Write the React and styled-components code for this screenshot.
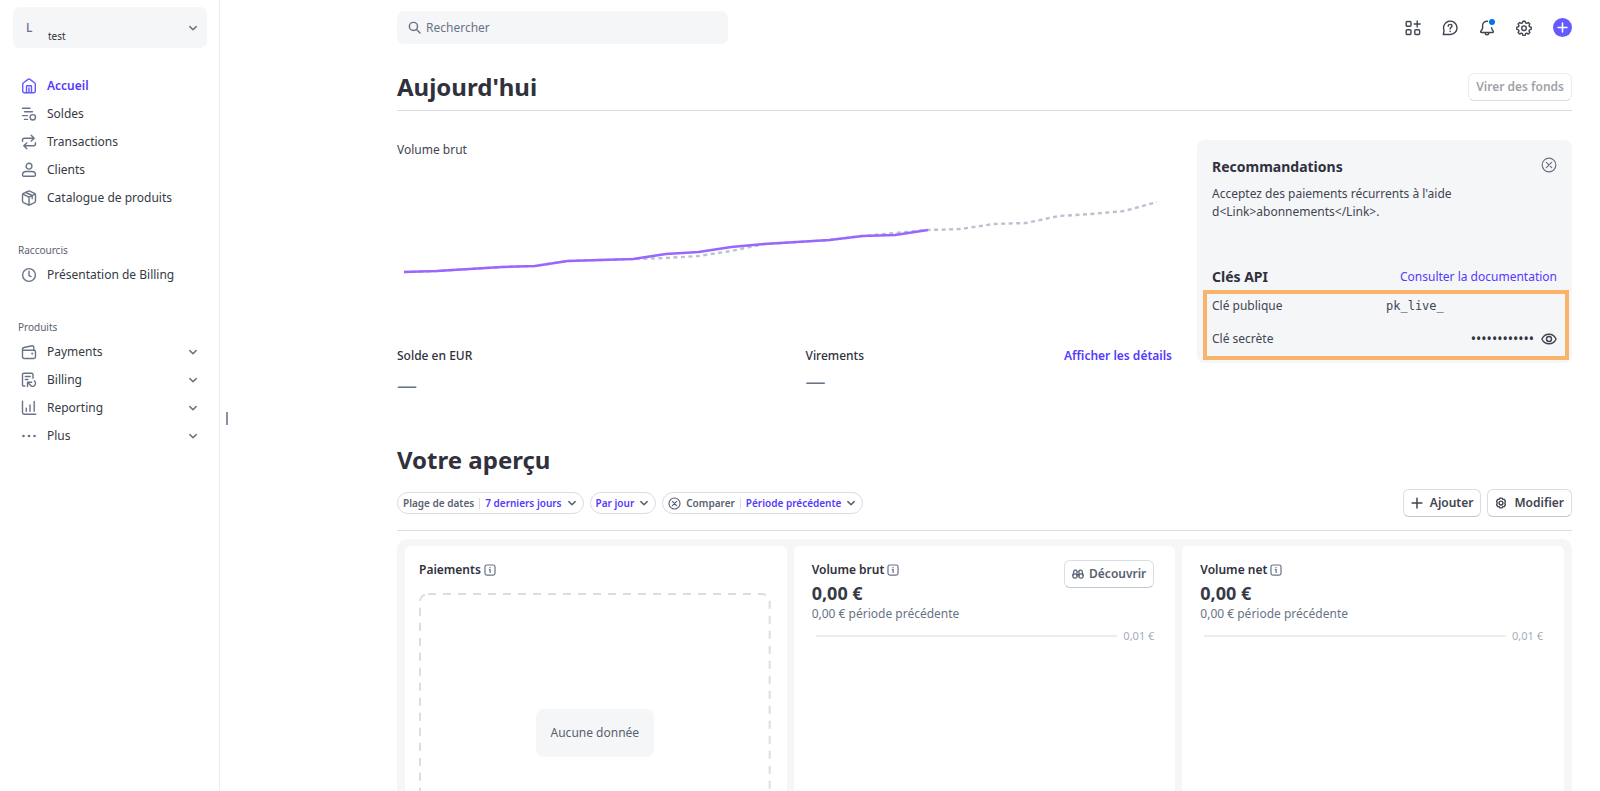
import React from "react";
import styled, { createGlobalStyle } from "styled-components";

const GlobalStyle = createGlobalStyle`
  * {
    box-sizing: border-box;
  }
  body {
    margin: 0;
    background: #fff;
    color: #414552;
    font-family: "Noto Sans", "Open Sans", sans-serif;
    font-size: 12px;
    line-height: 20px;
  }
  button, input {
    font-family: inherit;
    font-size: inherit;
    line-height: inherit;
    color: inherit;
  }
  a {
    color: inherit;
    text-decoration: none;
  }
  h1, h2, h3, p, ul, dl, dd {
    margin: 0;
    padding: 0;
  }
`;

// 16x16 stroke icons
const icons = {
  home: (
    <>
      <path d="M1.7 6.2v6.6c0 1.1.8 1.9 1.9 1.9h8.8c1.1 0 1.9-.8 1.9-1.9V6.2c0-.6-.3-1.1-.8-1.4L9 1.4c-.6-.4-1.4-.4-2 0L2.500 4.800c-.5.3-.8.8-.8 1.400z" />
      <path d="M5.500 14.500V8.400c0-.4.3-.7.7-.7h3.600c.4 0 .7.3.7.7v6.100M8 10v4.500" />
    </>
  ),
  balances: (
    <>
      <path d="M1.500 2.200h7.500M3.500 5.800h8M1.500 9.600h5M3.500 13.400h3" />
      <circle cx="11.800" cy="11.300" r="2.700" />
    </>
  ),
  transactions: (
    <>
      <path d="M1.500 7.300V6.200c0-1.100.9-2 2-2h9M10.200 1.300l3 2.900-3 2.900" />
      <path d="M14.500 8.700v1.100c0 1.100-.9 2-2 2h-9M5.800 8.900l-3 2.900 3 2.900" />
    </>
  ),
  person: (
    <>
      <circle cx="8" cy="4.200" r="2.900" />
      <path d="M1.500 12.700c0-2 1.700-3.200 3.700-3.200h5.600c2 0 3.700 1.200 3.700 3.200 0 1-.8 1.600-1.700 1.600H3.200c-.9 0-1.700-.6-1.700-1.600z" />
    </>
  ),
  box: (
    <>
      <path d="M7.300 1.200 2.500 3.400c-.6.300-1 .8-1 1.500v6.200c0 .7.400 1.200 1 1.500l4.800 2.200c.4.200 1 .200 1.400 0l4.800-2.200c.6-.3 1-.8 1-1.500V4.900c0-.7-.4-1.200-1-1.500L8.700 1.200c-.4-.2-1-.2-1.400 0z" />
      <path d="M1.800 4.200 8 7.100l6.200-2.900M8 7.100v7.700M4.800 2.500l6.400 3v3" />
    </>
  ),
  clock: (
    <>
      <circle cx="8" cy="8" r="6.400" />
      <path d="M8 4.200V8.600l2 1" />
    </>
  ),
  wallet: (
    <>
      <path d="M1.500 6.300h11.300c.9 0 1.700.7 1.700 1.700v4.800c0 1-.8 1.700-1.700 1.700H3.200c-1 0-1.700-.7-1.700-1.700V5.300c0-.9.600-1.600 1.500-1.800l8-1.700c.9-.2 1.800.5 1.800 1.400v2.700" />
      <circle cx="11.300" cy="9.600" r=".4" />
    </>
  ),
  billing: (
    <>
      <path d="M3.800 14H2.200c-.4 0-.7-.3-.7-.7V2.600c0-.8.600-1.400 1.400-1.400h7.700c.8 0 1.400.6 1.400 1.400v3.600M4.300 4.500h4.900M4.300 7.500h2.700" />
      <path d="M6.500 14.500V10.300h4.200M6.800 10.600l3 3c2 1.700 4.700.4 4.700-2.300 0-1-.4-1.900-1.200-2.500" />
    </>
  ),
  reporting: (
    <path d="M1.500 1.300v11.200c0 1 .7 1.700 1.700 1.700h11.600M5.300 8.200v3M9 5v6.200M13.200 1.500v9.700" />
  ),
  search: (
    <>
      <circle cx="6.700" cy="6.700" r="5" />
      <path d="m10.500 10.500 4.300 4.300" />
    </>
  ),
  apps: (
    <>
      <rect x="1.200" y="1.500" width="4.800" height="4.800" rx="1" />
      <rect x="1.200" y="9.700" width="4.800" height="4.800" rx="1" />
      <rect x="9.800" y="9.700" width="4.800" height="4.800" rx="1" />
      <path d="M12.200 1v6M9.200 4h6" />
    </>
  ),
  help: (
    <>
      <path d="M1.300 14.500h7a6.700 6.700 0 1 0-6.400-4.600c.2.600.2 1.100 0 1.700z" />
      <path d="M6.200 6.200c0-1.100.8-1.800 1.900-1.800s1.900.7 1.900 1.700c0 1.300-1.900 1.300-1.900 2.900M8.100 11.200v.3" />
    </>
  ),
  bell: (
    <>
      <path d="M8.500 1.200C5.700 1 3.600 3 3.600 5.600v2.200c0 .8-.2 1.300-.7 2L1.800 11.200c-.4.600-.1 1.300.6 1.300h11.200c.7 0 1-.7.6-1.300l-.9-1.300c-.5-.8-.7-1.300-.7-2.100" />
      <path d="M6 12.800c.2 1.200 1 2 2 2s1.800-.8 2-2" />
    </>
  ),
  gear: (
    <>
      <path d="M6.900 1.200h2.200l.5 1.700 1.100.5 1.600-.9 1.500 1.500-.8 1.600.5 1.200 1.700.4v2.100l-1.700.5-.5 1.200.9 1.600-1.600 1.500-1.500-.9-1.200.5-.5 1.700H6.900l-.5-1.700-1.200-.5-1.500.9-1.600-1.500.9-1.600-.5-1.200-1.700-.5V7.200l1.700-.4.5-1.200-.9-1.600 1.600-1.500 1.500.9 1.200-.5z" />
      <circle cx="8" cy="8.200" r="2.300" />
    </>
  ),
  cancel: (
    <>
      <circle cx="8" cy="8" r="6.800" />
      <path d="m5.300 5.300 5.400 5.400M10.700 5.300l-5.400 5.400" />
    </>
  ),
  eye: (
    <>
      <path d="M.9 8C2.300 5 5 3.200 8 3.200S13.700 5 15.100 8C13.700 11 11 12.800 8 12.800S2.300 11 .9 8z" />
      <circle cx="8" cy="8" r="2.500" />
    </>
  ),
  chevron: <path d="m3 5.800 5 5 5-5" />,
  plus: <path d="M8 1.500v13M1.500 8h13" />,
  info: (
    <>
      <rect x="1.300" y="1.300" width="13.400" height="13.400" rx="2.500" />
      <path d="M8 4.300v.8M7 7.500h1.200v3.700" />
    </>
  ),
  nut: (
    <>
      <path d="M6.500 1.500h3l1 1.600 1.900.1 1.500 2.600-.8 2.200.8 2.200-1.500 2.600-1.900.1-1 1.600h-3l-1-1.600-1.900-.1-1.500-2.600.8-2.200-.8-2.200 1.500-2.600 1.900-.1z" />
      <circle cx="8" cy="8" r="2.600" />
    </>
  ),
  binoculars: (
    <>
      <circle cx="4" cy="10.700" r="2.900" />
      <circle cx="12" cy="10.700" r="2.900" />
      <path d="M1.200 9.800 2.600 4c.3-1.700 3.700-1.700 4 0v6.500M14.800 9.800 13.400 4c-.3-1.700-3.700-1.700-4 0v6.500M6.600 5h2.800M6.600 8.500h2.800" />
    </>
  ),
  dots: (
    <g fill="currentColor" stroke="none">
      <circle cx="2.500" cy="8" r="1.300" />
      <circle cx="8" cy="8" r="1.300" />
      <circle cx="13.500" cy="8" r="1.300" />
    </g>
  ),
};

const Icon = ({ name, size = 16, weight = 1.4 }) => (
  <IconSvg
    width={size}
    height={size}
    viewBox="0 0 16 16"
    strokeWidth={weight}
    aria-hidden="true"
  >
    {icons[name]}
  </IconSvg>
);

const Chevron = () => <Icon name="chevron" size={10} weight={2.4} />;

const mainLinks = [
  { icon: "home", label: "Accueil", active: true },
  { icon: "balances", label: "Soldes" },
  { icon: "transactions", label: "Transactions" },
  { icon: "person", label: "Clients" },
  { icon: "box", label: "Catalogue de produits" },
];

const products = [
  { icon: "wallet", label: "Payments" },
  { icon: "billing", label: "Billing" },
  { icon: "reporting", label: "Reporting" },
  { icon: "dots", label: "Plus" },
];

// one point per hour, in chart units
const today = [
  112, 111, 109, 107, 106, 101, 100, 99, 94, 92, 87, 84, 82, 80, 76, 75, 70,
];
const yesterday = [
  112, 111, 109, 107, 106, 101, 100, 99, 98, 96, 91, 84, 82, 80, 76, 73, 70, 69,
  64, 63, 56, 54, 51, 42,
];
const toPoints = (values) =>
  values.map((y, i) => `${7 + (i * 753) / 23},${y}`).join(" ");

const Sidebar = () => (
  <Aside>
    <Account type="button">
      <Initial>L</Initial>
      <AccountName>test</AccountName>
      <Chevron />
    </Account>
    <Nav>
      <NavList>
        {mainLinks.map((link) => (
          <li key={link.label}>
            <NavLink href="#" $active={link.active}>
              <Icon name={link.icon} />
              {link.label}
            </NavLink>
          </li>
        ))}
      </NavList>
      <NavTitle>Raccourcis</NavTitle>
      <NavList>
        <li>
          <NavLink href="#">
            <Icon name="clock" />
            Présentation de Billing
          </NavLink>
        </li>
      </NavList>
      <NavTitle>Produits</NavTitle>
      <NavList>
        {products.map((item) => (
          <li key={item.label}>
            <NavToggle type="button">
              <Icon name={item.icon} />
              <span>{item.label}</span>
              <Chevron />
            </NavToggle>
          </li>
        ))}
      </NavList>
    </Nav>
  </Aside>
);

const Header = () => (
  <TopBar>
    <Search>
      <Icon name="search" size={13} weight={1.8} />
      <input type="search" placeholder="Rechercher" aria-label="Rechercher" />
    </Search>
    <Tools>
      <IconButton type="button" aria-label="Applications">
        <Icon name="apps" />
      </IconButton>
      <IconButton type="button" aria-label="Aide">
        <Icon name="help" />
      </IconButton>
      <IconButton type="button" aria-label="Notifications">
        <Icon name="bell" />
        <Dot />
      </IconButton>
      <IconButton type="button" aria-label="Paramètres">
        <Icon name="gear" />
      </IconButton>
      <CreateButton type="button" aria-label="Créer">
        <Icon name="plus" size={11} weight={2.2} />
      </CreateButton>
    </Tools>
  </TopBar>
);

const Chart = () => (
  <ChartSvg viewBox="0 0 775 120" role="img" aria-label="Volume brut">
    <polyline
      points={toPoints(yesterday)}
      stroke="#b9c2ce"
      strokeWidth="2.4"
      strokeDasharray="4 3.5"
    />
    <polyline
      points={toPoints(today)}
      stroke="#9966ff"
      strokeWidth="2.6"
      strokeLinejoin="round"
    />
  </ChartSvg>
);

const ApiCard = () => (
  <Panel>
    <PanelHead>
      <PanelTitle>Recommandations</PanelTitle>
      <IconButton type="button" aria-label="Fermer" $muted>
        <Icon name="cancel" weight={1.2} />
      </IconButton>
    </PanelHead>
    <PanelText>
      Acceptez des paiements récurrents à l'aide
      <br />
      {"d<Link>abonnements</Link>."}
    </PanelText>
    <PanelHead>
      <PanelTitle>Clés API</PanelTitle>
      <TextLink href="#">Consulter la documentation</TextLink>
    </PanelHead>
    <Keys>
      <KeyRow>
        <dt>Clé publique</dt>
        <KeyValue>pk_live_</KeyValue>
      </KeyRow>
      <KeyRow>
        <dt>Clé secrète</dt>
        <SecretValue>
          <span>••••••••••••</span>
          <IconButton type="button" aria-label="Afficher la clé">
            <Icon name="eye" />
          </IconButton>
        </SecretValue>
      </KeyRow>
    </Keys>
  </Panel>
);

const VolumeCard = ({ title, action }) => (
  <Card>
    <CardHead>
      <div>
        <CardTitle>
          {title} <Icon name="info" size={12} weight={1.6} />
        </CardTitle>
        <Amount>0,00 €</Amount>
        <Previous>0,00 € période précédente</Previous>
      </div>
      {action}
    </CardHead>
    <Axis>
      <AxisLine />
      0,01 €
    </Axis>
  </Card>
);

const App = () => (
  <>
    <GlobalStyle />
    <Shell>
      <Sidebar />
      <Handle />
      <Main>
        <Header />
        <TitleRow>
          <Title>Aujourd'hui</Title>
          <Button type="button" disabled>
            Virer des fonds
          </Button>
        </TitleRow>
        <Today>
          <div>
            <p>Volume brut</p>
            <Chart />
            <Balances>
              <Balance $gap={10}>
                <BalanceHead>
                  <h3>Solde en EUR</h3>
                </BalanceHead>
                <Dash>—</Dash>
              </Balance>
              <Balance $gap={6}>
                <BalanceHead>
                  <h3>Virements</h3>
                  <TextLink href="#" $strong>
                    Afficher les détails
                  </TextLink>
                </BalanceHead>
                <Dash>—</Dash>
              </Balance>
            </Balances>
          </div>
          <ApiCard />
        </Today>
        <OverviewTitle>Votre aperçu</OverviewTitle>
        <FilterRow>
          <Filters>
            <Chip type="button">
              <span>Plage de dates</span>
              <Separator />
              <b>7 derniers jours</b>
              <Chevron />
            </Chip>
            <Chip type="button">
              <b>Par jour</b>
              <Chevron />
            </Chip>
            <Chip type="button">
              <Icon name="cancel" size={13} weight={1.4} />
              <span>Comparer</span>
              <Separator />
              <b>Période précédente</b>
              <Chevron />
            </Chip>
          </Filters>
          <Filters>
            <Button type="button">
              <Icon name="plus" size={12} weight={2} />
              Ajouter
            </Button>
            <Button type="button">
              <Icon name="nut" size={12} weight={1.8} />
              Modifier
            </Button>
          </Filters>
        </FilterRow>
        <Cards>
          <Card $narrow>
            <CardTitle>
              Paiements <Icon name="info" size={12} weight={1.6} />
            </CardTitle>
            <Empty>
              <EmptyBorder aria-hidden="true">
                <rect x="1" y="1" rx="8" />
              </EmptyBorder>
              <EmptyLabel>Aucune donnée</EmptyLabel>
            </Empty>
          </Card>
          <VolumeCard
            title="Volume brut"
            action={
              <Button type="button" $soft>
                <Icon name="binoculars" size={12} weight={1.6} />
                Découvrir
              </Button>
            }
          />
          <VolumeCard title="Volume net" />
        </Cards>
      </Main>
    </Shell>
  </>
);

const IconSvg = styled.svg`
  flex: none;
  fill: none;
  stroke: currentColor;
  stroke-linecap: round;
  stroke-linejoin: round;
`;

const Shell = styled.div`
  display: flex;
  height: 100vh;
  overflow: hidden;
`;

const Aside = styled.aside`
  flex: none;
  width: 220px;
  padding: 7px 12px 0 13px;
  border-right: 1px solid #ebeef1;
`;

const Account = styled.button`
  display: flex;
  align-items: center;
  width: 100%;
  height: 41px;
  padding: 0 9px 0 13px;
  border: 0;
  border-radius: 7px;
  background: #f5f6f8;
  color: #687385;
  text-align: left;
`;

const Initial = styled.span`
  width: 22px;
  font-weight: 500;
  color: #6c6f8f;
`;

const AccountName = styled.span`
  flex: 1;
  padding-top: 16px;
  font-size: 10px;
  color: #30313d;
`;

const Nav = styled.nav`
  padding-top: 24px;
`;

const NavList = styled.ul`
  list-style: none;
`;

const NavLink = styled.a`
  display: flex;
  align-items: center;
  gap: 10px;
  height: 28px;
  padding: 0 9px 0 8px;
  color: ${(p) => (p.$active ? "#533afd" : "#353a44")};
  font-weight: ${(p) => (p.$active ? 600 : 400)};

  svg {
    color: ${(p) => (p.$active ? "#635bff" : "#687385")};
  }
`;

const NavToggle = styled(NavLink).attrs({ as: "button" })`
  width: 100%;
  border: 0;
  background: none;
  text-align: left;

  span {
    flex: 1;
  }
`;

const NavTitle = styled.h3`
  margin-top: 27px;
  padding-left: 5px;
  font-size: 10px;
  line-height: 22px;
  font-weight: 400;
  color: #596171;
`;

const Handle = styled.div`
  flex: none;
  align-self: center;
  width: 2px;
  height: 13px;
  margin: 46px 0 0 6px;
  background: #8792a2;
`;

const Main = styled.main`
  flex: 1;
  min-width: 0;
  padding: 11px 28px 0 169px;
`;

const TopBar = styled.header`
  display: flex;
  justify-content: space-between;
  align-items: center;
`;

const Search = styled.label`
  display: flex;
  align-items: center;
  gap: 5px;
  width: 331px;
  height: 33px;
  padding: 0 11px;
  border-radius: 7px;
  background: #f5f6f8;
  color: #687385;

  input {
    flex: 1;
    border: 0;
    padding: 0;
    background: none;
    outline: none;
  }
  input::placeholder {
    color: #687385;
  }
`;

const Tools = styled.div`
  display: flex;
  align-items: center;
  gap: 21px;
`;

const IconButton = styled.button`
  position: relative;
  display: flex;
  padding: 0;
  border: 0;
  background: none;
  color: ${(p) => (p.$muted ? "#687385" : "#414552")};
`;

const Dot = styled.span`
  position: absolute;
  top: -1px;
  right: 0;
  width: 6px;
  height: 6px;
  border-radius: 50%;
  background: #0073e6;
`;

const CreateButton = styled(IconButton)`
  align-items: center;
  justify-content: center;
  width: 19px;
  height: 19px;
  border-radius: 50%;
  background: #635bff;
  color: #fff;
`;

const TitleRow = styled.div`
  display: flex;
  align-items: center;
  justify-content: space-between;
  margin-top: 27px;
  padding-bottom: 7px;
  border-bottom: 1px solid #d8dee4;
`;

const Title = styled.h1`
  font-size: 24px;
  line-height: 32px;
  font-weight: 700;
  color: #30313d;
`;

const OverviewTitle = styled(Title).attrs({ as: "h2" })`
  margin-top: 48px;
`;

const Button = styled.button`
  display: flex;
  align-items: center;
  gap: ${(p) => (p.$soft ? 5 : 7)}px;
  height: 28px;
  padding: 0 7px;
  border: 1px solid #d8dee4;
  border-bottom-color: #c0c8d2;
  border-radius: 6px;
  background: #fff;
  color: ${(p) => (p.$soft ? "#596171" : "#414552")};
  font-weight: 600;

  &:disabled {
    border-color: #ebeef1;
    border-bottom-color: #d8dee4;
    color: #a0a2a8;
  }
`;

const Today = styled.section`
  display: grid;
  grid-template-columns: minmax(0, 1fr) 375px;
  align-items: start;
  gap: 25px;
  margin-top: 29px;
`;

const ChartSvg = styled.svg`
  display: block;
  width: 100%;
  fill: none;
`;

const Balances = styled.div`
  display: grid;
  grid-template-columns: 1fr 1fr;
  gap: 42px;
  margin-top: 66px;
`;

const Balance = styled.div`
  display: flex;
  flex-direction: column;
  gap: ${(p) => p.$gap}px;
`;

const BalanceHead = styled.div`
  display: flex;
  justify-content: space-between;

  h3 {
    font-size: 12px;
    font-weight: 500;
    color: #30313d;
  }
`;

const Dash = styled.p`
  font-size: 20px;
  color: #687385;
`;

const TextLink = styled.a`
  color: #533afd;
  font-weight: ${(p) => (p.$strong ? 600 : 400)};
`;

const Panel = styled.section`
  padding: 17px 15px 3px;
  border-radius: 8px;
  background: #f5f6f8;
`;

const PanelHead = styled.div`
  display: flex;
  align-items: flex-start;
  justify-content: space-between;
`;

const PanelTitle = styled.h2`
  font-size: 14px;
  line-height: 20px;
  font-weight: 700;
  color: #30313d;
`;

const PanelText = styled.p`
  margin: 8px 0 46px;
  line-height: 18px;
`;

const Keys = styled.dl`
  margin: 3px -12px 0 -9px;
  padding: 2px 8px 7px 5px;
  border: 4px solid #fab36b;
  display: flex;
  flex-direction: column;
  gap: 13px;
`;

const KeyRow = styled.div`
  display: grid;
  grid-template-columns: 174px 1fr;
`;

const KeyValue = styled.dd`
  font-family: "DejaVu Sans Mono", monospace;
`;

const SecretValue = styled.dd`
  display: flex;
  align-items: center;
  justify-content: flex-end;
  gap: 7px;
  font-size: 14px;
  color: #30313d;
`;

const FilterRow = styled.div`
  display: flex;
  align-items: center;
  justify-content: space-between;
  margin-top: 13px;
  padding-bottom: 13px;
  border-bottom: 1px solid #d8dee4;
`;

const Filters = styled.div`
  display: flex;
  align-items: center;
  gap: 6px;
`;

const Chip = styled.button`
  display: flex;
  align-items: center;
  gap: 5px;
  height: 22px;
  padding: 0 6px 0 5px;
  border: 1px solid #d8dee4;
  border-radius: 11px;
  background: #fff;
  color: #596171;
  font-size: 10px;
  font-weight: 600;

  b {
    font-weight: 600;
    color: #533afd;
  }
`;

const Separator = styled.span`
  width: 1px;
  height: 11px;
  background: #d8dee4;
`;

const Cards = styled.section`
  display: grid;
  grid-template-columns: repeat(3, minmax(0, 1fr));
  gap: 7px;
  margin-top: 8px;
  padding: 7px 8px;
  border-radius: 10px;
  background: #f5f6f8;
`;

const Card = styled.article`
  padding: ${(p) => (p.$narrow ? "14px 16px 14px 14px" : "14px 21px 14px 18px")};
  border-radius: 5px;
  background: #fff;
`;

const CardHead = styled.div`
  display: flex;
  align-items: flex-start;
  justify-content: space-between;
`;

const CardTitle = styled.h3`
  display: flex;
  align-items: center;
  gap: 3px;
  font-size: 12px;
  font-weight: 600;
  color: #30313d;

  svg {
    color: #687385;
  }
`;

const Amount = styled.p`
  font-size: 18px;
  line-height: 26px;
  font-weight: 700;
  color: #353a44;
`;

const Previous = styled.p`
  line-height: 16px;
  color: #687385;
`;

const Axis = styled.div`
  display: flex;
  align-items: center;
  gap: 6px;
  margin-top: 6px;
  padding-left: 4px;
  font-size: 11px;
  line-height: 16px;
  color: #a3acba;
`;

const AxisLine = styled.span`
  flex: 1;
  height: 2px;
  background: #ebeeef;
`;

const Empty = styled.div`
  position: relative;
  display: flex;
  align-items: center;
  justify-content: center;
  height: 280px;
  margin-top: 13px;
`;

const EmptyBorder = styled.svg`
  position: absolute;
  inset: 0;
  width: 100%;
  height: 100%;
  fill: none;
  stroke: #d8dee4;
  stroke-width: 2;
  stroke-dasharray: 8 7;

  rect {
    width: calc(100% - 2px);
    height: calc(100% - 2px);
  }
`;

const EmptyLabel = styled.p`
  position: relative;
  padding: 14px 15px;
  border-radius: 8px;
  background: #f5f6f8;
  color: #596171;
`;

export default App;
